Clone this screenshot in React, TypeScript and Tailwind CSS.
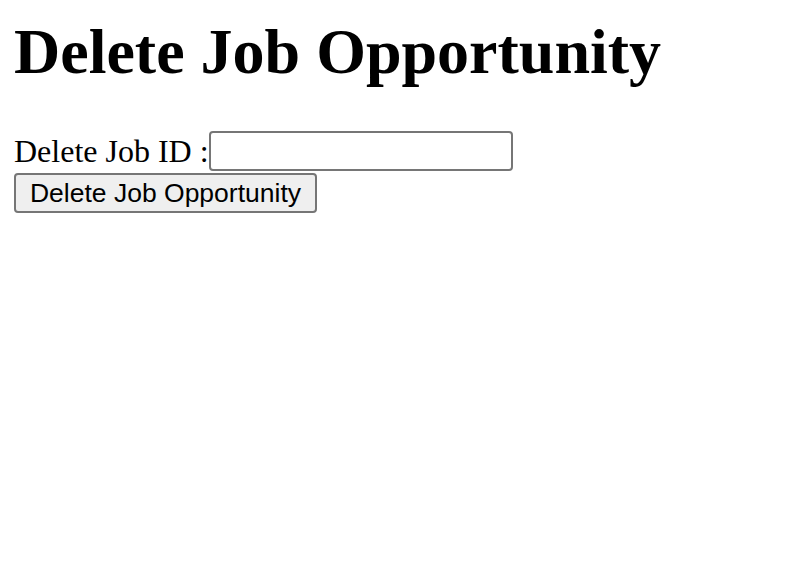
export default function App() {
  return (
    <div className="min-h-[580px] bg-white pl-[14px] pt-[15px] text-black" style={{ fontFamily: '"Liberation Serif", "Times New Roman", serif' }}>
      {/* Heading */}
      <h1 className="mb-[42px] text-[64px] font-bold leading-[74px]">Delete Job Opportunity</h1>

      {/* Delete form */}
      <form onSubmit={(e) => e.preventDefault()}>
        <div className="flex items-center">
          <label htmlFor="jobId" className="text-[32px] leading-[37px]">
            Delete Job ID :
          </label>
          <input
            id="jobId"
            type="text"
            className="box-border h-[40px] w-[304px] rounded-[4px] border-2 border-[#767676] bg-white px-[4px] text-[26px] outline-none"
            style={{ fontFamily: '"Liberation Sans", Arial, sans-serif' }}
          />
        </div>
        <button
          type="submit"
          className="mt-[2px] box-border h-[40px] w-[303px] rounded-[4px] border-2 border-[#767676] bg-[#efefef] px-0 text-center text-[26.5px] leading-[30px] text-black"
          style={{ fontFamily: '"Liberation Sans", Arial, sans-serif' }}
        >
          Delete Job Opportunity
        </button>
      </form>
    </div>
  );
}
